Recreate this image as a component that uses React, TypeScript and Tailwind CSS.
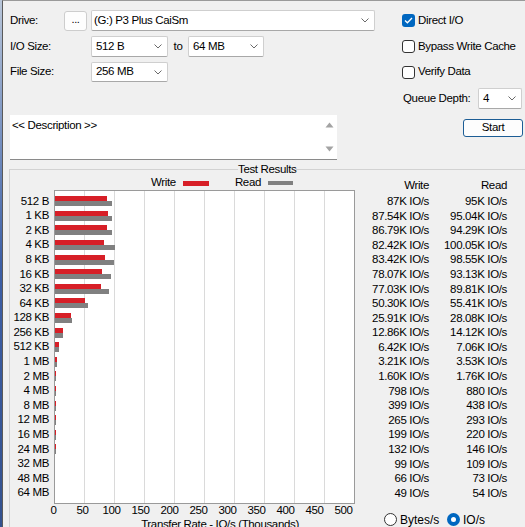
import React from "react";

const rows: [string, number, number, string, string][] = [
  ["512 B", 87, 95, "87K IO/s", "95K IO/s"],
  ["1 KB", 87.54, 95.04, "87.54K IO/s", "95.04K IO/s"],
  ["2 KB", 86.79, 94.29, "86.79K IO/s", "94.29K IO/s"],
  ["4 KB", 82.42, 100.05, "82.42K IO/s", "100.05K IO/s"],
  ["8 KB", 83.42, 98.55, "83.42K IO/s", "98.55K IO/s"],
  ["16 KB", 78.07, 93.13, "78.07K IO/s", "93.13K IO/s"],
  ["32 KB", 77.03, 89.81, "77.03K IO/s", "89.81K IO/s"],
  ["64 KB", 50.3, 55.41, "50.30K IO/s", "55.41K IO/s"],
  ["128 KB", 25.91, 28.08, "25.91K IO/s", "28.08K IO/s"],
  ["256 KB", 12.86, 14.12, "12.86K IO/s", "14.12K IO/s"],
  ["512 KB", 6.42, 7.06, "6.42K IO/s", "7.06K IO/s"],
  ["1 MB", 3.21, 3.53, "3.21K IO/s", "3.53K IO/s"],
  ["2 MB", 1.6, 1.76, "1.60K IO/s", "1.76K IO/s"],
  ["4 MB", 0.798, 0.88, "798 IO/s", "880 IO/s"],
  ["8 MB", 0.399, 0.438, "399 IO/s", "438 IO/s"],
  ["12 MB", 0.265, 0.293, "265 IO/s", "293 IO/s"],
  ["16 MB", 0.199, 0.22, "199 IO/s", "220 IO/s"],
  ["24 MB", 0.132, 0.146, "132 IO/s", "146 IO/s"],
  ["32 MB", 0.099, 0.109, "99 IO/s", "109 IO/s"],
  ["48 MB", 0.066, 0.073, "66 IO/s", "73 IO/s"],
  ["64 MB", 0.049, 0.054, "49 IO/s", "54 IO/s"],
];

function Chevron() {
  return (
    <svg width="8" height="5" viewBox="0 0 8 5" className="shrink-0">
      <path d="M0.5 0.5 L4 4 L7.5 0.5" stroke="#6a6a6a" fill="none" strokeWidth="1" />
    </svg>
  );
}

function Combo({ className, text }: { className: string; text: string }) {
  return (
    <div
      className={
        "flex items-center justify-between bg-white border border-[#cfcfcf] border-b-[#a8a8a8] rounded-[2px] pr-[5px] shrink-0 " +
        className
      }
    >
      <span>{text}</span>
      <Chevron />
    </div>
  );
}

function Check({ checked, label }: { checked: boolean; label: string }) {
  return (
    <div className="flex items-center gap-[3px]">
      {checked ? (
        <div className="w-[13px] h-[13px] shrink-0 rounded-[3px] bg-[#0067c0] flex items-center justify-center">
          <svg width="9" height="7" viewBox="0 0 9 7">
            <path d="M1 3.5 L3.4 5.8 L8 1" stroke="#fff" strokeWidth="1.3" fill="none" />
          </svg>
        </div>
      ) : (
        <div className="w-[13px] h-[13px] shrink-0 rounded-[3px] bg-white border border-[#333]" />
      )}
      <span>{label}</span>
    </div>
  );
}

export default function App() {
  return (
    <div className="w-[525px] h-[527px] overflow-hidden flex bg-[#f0f0f0] text-black text-[11.5px] tracking-[-0.35px] leading-none whitespace-nowrap font-['Liberation_Sans',Arial,sans-serif]">
      <div className="w-[2px] shrink-0 bg-linear-to-b from-[#b9c6d9] via-[#3d5fa6] to-[#34528f]" />
      <div className="flex-1 flex flex-col border-l border-t border-l-[#5a5a5a] border-t-[#9a9a9a] min-w-0">
        {/* Top area */}
        <div className="flex pt-[9px] pl-[7px]">
          <div className="w-[365px] shrink-0 flex flex-col">
            <div className="flex items-center h-[21px]">
              <span className="w-[54px]">Drive:</span>
              <div className="w-[23px] h-[20px] shrink-0 border border-[#cdcdcd] rounded-[3px] bg-[#fdfdfd] flex items-center justify-center text-[11px] pb-[3px]">
                ...
              </div>
              <Combo className="ml-[4px] w-[284px] h-[21px] pl-[2px]" text="(G:) P3 Plus CaiSm" />
            </div>
            <div className="flex items-center h-[21px] mt-[5px]">
              <span className="w-[81px]">I/O Size:</span>
              <Combo className="w-[77px] h-[21px] pl-[4px]" text="512 B" />
              <span className="w-[20px] text-center">to</span>
              <Combo className="w-[76px] h-[21px] pl-[4px]" text="64 MB" />
            </div>
            <div className="flex items-center h-[20px] mt-[5px]">
              <span className="w-[81px]">File Size:</span>
              <Combo className="w-[77px] h-[20px] pl-[4px]" text="256 MB" />
            </div>
            <div className="mt-[33px] w-[327px] h-[45px] bg-white border-b border-b-[#8a8a8a] flex">
              <div className="flex-1 pl-[2px] pt-[5px]">&lt;&lt; Description &gt;&gt;</div>
              <div className="w-[16px] flex flex-col items-center justify-between py-[7px]">
                <svg width="9" height="6" viewBox="0 0 9 6">
                  <path d="M0.5 5.5 L4.5 0.5 L8.5 5.5 Z" fill="#a3a3a3" />
                </svg>
                <svg width="9" height="6" viewBox="0 0 9 6">
                  <path d="M0.5 0.5 L4.5 5.5 L8.5 0.5 Z" fill="#a3a3a3" />
                </svg>
              </div>
            </div>
          </div>
          <div className="ml-[27px] w-[121px] shrink-0 flex flex-col">
            <div className="h-[21px] flex items-center">
              <Check checked label="Direct I/O" />
            </div>
            <div className="h-[21px] mt-[5px] flex items-center">
              <Check checked={false} label="Bypass Write Cache" />
            </div>
            <div className="h-[20px] mt-[5px] flex items-center">
              <Check checked={false} label="Verify Data" />
            </div>
            <div className="h-[21px] mt-[6px] flex items-center pl-[1px] pr-[1px]">
              <span>Queue Depth:</span>
              <Combo className="ml-auto w-[44px] h-[21px] pl-[4px]" text="4" />
            </div>
            <div className="mt-[10px] ml-auto w-[60px] h-[18px] border border-[#1c5d95] rounded-[3px] bg-[#fdfdfd] flex items-center justify-center">
              Start
            </div>
          </div>
        </div>

        {/* Test results group */}
        <fieldset className="mt-[2px] ml-[6px] w-[540px] h-[420px] shrink-0 border border-[#d2d2d2]">
          <legend className="ml-[228px] leading-[14px]">Test Results</legend>
          <div className="flex">
            <div className="w-[348px] shrink-0 flex flex-col">
              <div className="h-[14px] flex items-center pl-[141px]">
                <span>Write</span>
                <div className="ml-[7px] w-[26px] h-[5px] bg-[#d71f27]" />
                <span className="ml-[26px]">Read</span>
                <div className="ml-[7px] w-[25px] h-[4px] bg-[#808080]" />
              </div>
              <div className="flex">
                <div className="w-[44px] pt-[4px] pr-[5px] flex flex-col">
                  {rows.map((r) => (
                    <div key={r[0]} className="h-[14.6px] flex items-center justify-end">
                      {r[0]}
                    </div>
                  ))}
                </div>
                <div className="relative w-[301px] h-[314px] bg-white border border-[#9a9a9a]">
                  {[1, 2, 3, 4, 5, 6, 7, 8, 9].map((i) => (
                    <div
                      key={i}
                      className="absolute top-0 bottom-0 w-px bg-[#dadada]"
                      style={{ left: i * 30 - 1 }}
                    />
                  ))}
                  <div className="relative pt-[3px] flex flex-col">
                    {rows.map((r) => (
                      <div key={r[0]} className="h-[14.6px] flex flex-col justify-center">
                        <div className="h-[5px] bg-[#d71f27]" style={{ width: r[1] * 0.6 }} />
                        <div className="h-[5px] bg-[#808080]" style={{ width: r[2] * 0.6 }} />
                      </div>
                    ))}
                  </div>
                </div>
              </div>
              <div className="flex ml-[29px] h-[14px] items-center">
                {[0, 50, 100, 150, 200, 250, 300, 350, 400, 450, 500].map((v) => (
                  <span key={v} className="w-[30px] text-center">
                    {v}
                  </span>
                ))}
              </div>
              <div className="w-[420px] text-center h-[12px] leading-[12px]">
                Transfer Rate - IO/s (Thousands)
              </div>
            </div>
            <div className="flex flex-col pt-[3px]">
              <div className="flex h-[14px] items-center">
                <span className="w-[71px] text-right">Write</span>
                <span className="w-[78px] text-right">Read</span>
              </div>
              <div className="mt-[1.4px] flex flex-col">
                {rows.map((r) => (
                  <div key={r[0]} className="flex h-[14.6px] items-center">
                    <span className="w-[71px] text-right">{r[3]}</span>
                    <span className="w-[78px] text-right">{r[4]}</span>
                  </div>
                ))}
              </div>
              <div className="mt-[12px] h-[14px] flex items-center pl-[26px] text-[12px] tracking-normal">
                <div className="w-[13px] h-[13px] shrink-0 rounded-full border border-[#333] bg-white" />
                <span className="ml-[3px] w-[47px]">Bytes/s</span>
                <div className="w-[13px] h-[13px] shrink-0 rounded-full bg-[#0067c0] flex items-center justify-center">
                  <div className="w-[5px] h-[5px] rounded-full bg-white" />
                </div>
                <span className="ml-[3px]">IO/s</span>
              </div>
            </div>
          </div>
        </fieldset>
      </div>
    </div>
  );
}
